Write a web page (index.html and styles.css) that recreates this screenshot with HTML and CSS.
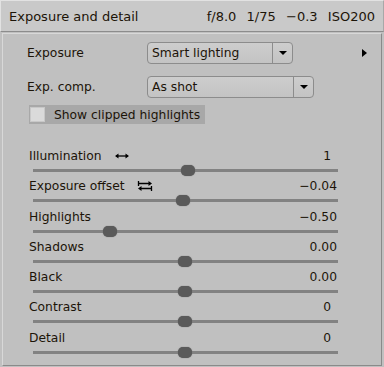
FILE: index.html
```html
<!DOCTYPE html>
<html lang="en">
<head>
  <meta charset="UTF-8" />
  <title>Exposure and detail</title>
  <link rel="stylesheet" href="styles.css">
</head>
<body>
  <div class="tool-header">
    <span class="tool-title">Exposure and detail</span>
    <span class="tool-info">f/8.0&nbsp; 1/75&nbsp; −0.3&nbsp; ISO200</span>
  </div>
  <div class="panel">
    <div class="combo-row">
      <span class="combo-label">Exposure</span>
      <div class="combo combo-short">
        <span class="combo-text">Smart lighting</span>
        <span class="combo-btn"><span class="arrow-down"></span></span>
      </div>
      <span class="arrow-right"></span>
    </div>
    <div class="combo-row">
      <span class="combo-label">Exp. comp.</span>
      <div class="combo combo-long">
        <span class="combo-text">As shot</span>
        <span class="combo-btn"><span class="arrow-down"></span></span>
      </div>
    </div>
    <div class="check-row">
      <span class="checkbox"></span>
      <span class="check-label">Show clipped highlights</span>
    </div>

    <div class="sliders">
      <div class="slider">
        <div class="slider-top">
          <span class="slider-label">Illumination
            <svg class="icon" width="16" height="8" viewBox="0 0 16 8">
              <path d="M2 4H14" stroke="#000" stroke-width="1.3"/>
              <path d="M1 4L4.5 1.5V6.5Z M15 4L11.5 1.5V6.5Z" fill="#000"/>
            </svg>
          </span>
          <span class="slider-value int">1</span>
        </div>
        <div class="track"><span class="thumb" style="left: 50.8%"></span></div>
      </div>
      <div class="slider">
        <div class="slider-top">
          <span class="slider-label">Exposure offset
            <svg class="icon" width="16" height="12" viewBox="0 0 16 12">
              <path d="M1.5 1V6M14.5 6V11" stroke="#000" stroke-width="1.3"/>
              <path d="M2 3.5H13M3 8.5H14" stroke="#000" stroke-width="1.3"/>
              <path d="M15 3.5L11.5 1V6Z M1 8.5L4.5 6V11Z" fill="#000"/>
            </svg>
          </span>
          <span class="slider-value">−0.04</span>
        </div>
        <div class="track"><span class="thumb" style="left: 49.2%"></span></div>
      </div>
      <div class="slider">
        <div class="slider-top">
          <span class="slider-label">Highlights</span>
          <span class="slider-value">−0.50</span>
        </div>
        <div class="track"><span class="thumb" style="left: 25.2%"></span></div>
      </div>
      <div class="slider">
        <div class="slider-top">
          <span class="slider-label">Shadows</span>
          <span class="slider-value">0.00</span>
        </div>
        <div class="track"><span class="thumb" style="left: 49.8%"></span></div>
      </div>
      <div class="slider">
        <div class="slider-top">
          <span class="slider-label">Black</span>
          <span class="slider-value">0.00</span>
        </div>
        <div class="track"><span class="thumb" style="left: 49.8%"></span></div>
      </div>
      <div class="slider">
        <div class="slider-top">
          <span class="slider-label">Contrast</span>
          <span class="slider-value int">0</span>
        </div>
        <div class="track"><span class="thumb" style="left: 49.8%"></span></div>
      </div>
      <div class="slider">
        <div class="slider-top">
          <span class="slider-label">Detail</span>
          <span class="slider-value int">0</span>
        </div>
        <div class="track"><span class="thumb" style="left: 49.8%"></span></div>
      </div>
    </div>
  </div>
</body>
</html>
```

FILE: styles.css
```css
* {
  margin: 0;
  padding: 0;
  box-sizing: border-box;
}

body {
  font-family: 'DejaVu Sans', sans-serif;
  font-size: 12.3px;
  color: #1c1408;
  background: #c0c0c0;
  width: 384px;
  height: 367px;
  overflow: hidden;
}

/* Header bar */
.tool-header {
  height: 32px;
  display: flex;
  align-items: center;
  justify-content: space-between;
  padding: 0 8px 0 8px;
  background: #c9c9c9;
  border: 1px solid #e2e2e2;
  border-right-color: #a8a8a8;
  border-bottom: 1px solid #8c8c8c;
  font-size: 13px;
}

.tool-info {
  word-spacing: 1px;
}

/* Main panel */
.panel {
  margin: 1px 2px 0 2px;
  height: 333px;
  background: #c0c0c0;
  border: 1px solid #d8d8d8;
  border-right-color: #8a8a8a;
  border-bottom-color: #8a8a8a;
  padding: 8px 0 0 24px;
}

.combo-row {
  display: flex;
  align-items: center;
  height: 22px;
  margin-bottom: 7px;
}

.combo-row:first-child {
  margin-bottom: 12px;
}

.combo-label {
  width: 120px;
}

.combo {
  display: flex;
  height: 22px;
  border: 1px solid #8c8c8c;
  border-radius: 4px;
  background: linear-gradient(#cdcdcd, #c3c3c3);
}

.combo-short {
  width: 146px;
}

.combo-long {
  width: 167px;
}

.combo-text {
  flex: 1;
  padding-left: 4px;
  line-height: 20px;
}

.combo-btn {
  width: 20px;
  border-left: 1px solid #8c8c8c;
  display: flex;
  align-items: center;
  justify-content: center;
}

.arrow-down {
  width: 0;
  height: 0;
  border-left: 4px solid transparent;
  border-right: 4px solid transparent;
  border-top: 4px solid #000;
}

.arrow-right {
  width: 0;
  height: 0;
  margin-left: 69px;
  border-top: 4px solid transparent;
  border-bottom: 4px solid transparent;
  border-left: 5px solid #000;
}

.check-row {
  display: flex;
  align-items: center;
  width: 176px;
  height: 19px;
  margin-left: 2px;
  background: #a8a8a8;
}

.checkbox {
  width: 15px;
  height: 15px;
  margin-left: 1px;
  background: #dadada;
  border: 1px solid #c8c8c8;
}

.check-label {
  margin-left: 9px;
}

/* Sliders */
.sliders {
  margin-top: 24px;
}

.slider {
  height: 30.3px;
}

.slider-top {
  display: flex;
  justify-content: space-between;
  align-items: center;
  height: 16px;
  padding-right: 44px;
  margin-left: 2px;
}

.slider-label {
  display: flex;
  align-items: center;
}

.icon {
  margin-left: 12px;
}

.slider-value.int {
  padding-right: 6px;
}

.track {
  position: relative;
  margin: 5px 0 0 6px;
  width: 305px;
  height: 3px;
  background: #828282;
}

.thumb {
  position: absolute;
  top: -4px;
  width: 14px;
  height: 11px;
  margin-left: -7px;
  border-radius: 5px;
  background: #5a5a5a;
  box-shadow: 0 0 1px #5a5a5a;
}
```
